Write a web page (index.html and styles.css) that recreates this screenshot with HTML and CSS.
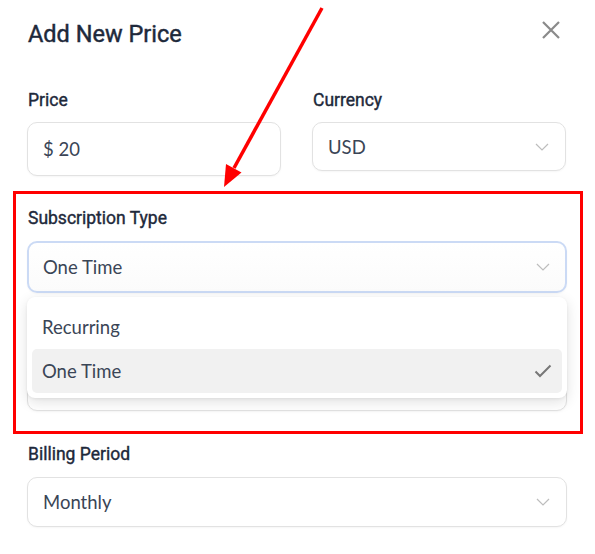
FILE: index.html
```html
<!DOCTYPE html>
<html>
<head>
<meta charset="utf-8">
<link rel="stylesheet" href="styles.css">
</head>
<body>
<div class="modal">
  <div class="header">
    <h1 class="title">Add New Price</h1>
    <svg class="close" width="20" height="20" viewBox="0 0 20 20"><path d="M2 2L18 18M18 2L2 18" stroke="#8a8a8a" stroke-width="2.2" fill="none"/></svg>
  </div>

  <div class="row">
    <div class="field">
      <label class="label">Price</label>
      <div class="control tall">$ 20</div>
    </div>
    <div class="field">
      <label class="label">Currency</label>
      <div class="control short">USD<svg class="chev" width="14" height="8" viewBox="0 0 14 8"><path d="M1 1L7 7L13 1" stroke="#bdbdbd" stroke-width="1.2" fill="none"/></svg></div>
    </div>
  </div>

  <div class="field sub">
    <label class="label">Subscription Type</label>
    <div class="select-wrap">
      <div class="control focused">One Time<svg class="chev" width="14" height="8" viewBox="0 0 14 8"><path d="M1 1L7 7L13 1" stroke="#bdbdbd" stroke-width="1.2" fill="none"/></svg></div>
      <div class="menu">
        <div class="item">Recurring</div>
        <div class="item active">One Time<svg width="18" height="14" viewBox="0 0 18 14"><path d="M1.5 7.5L6 12L16.5 1.5" stroke="#777" stroke-width="2" fill="none"/></svg></div>
      </div>
    </div>
  </div>

  <div class="field hidden-field">
    <div class="label-space"></div>
    <div class="control"></div>
  </div>

  <div class="field billing">
    <label class="label">Billing Period</label>
    <div class="control">Monthly<svg class="chev" width="14" height="8" viewBox="0 0 14 8"><path d="M1 1L7 7L13 1" stroke="#bdbdbd" stroke-width="1.2" fill="none"/></svg></div>
  </div>
</div>

<div class="annot-box"></div>
<svg class="annot-arrow" width="595" height="554" viewBox="0 0 595 554">
  <line x1="322" y1="8" x2="234" y2="168" stroke="#ff0000" stroke-width="3.5"/>
  <polygon points="224,187 241.5,172.5 226,164" fill="#ff0000"/>
</svg>
</body>
</html>
```

FILE: styles.css
```css
* { box-sizing: border-box; }
html, body { margin: 0; padding: 0; background: #fff; }
body { width: 595px; height: 554px; overflow: hidden; position: relative; }

.modal {
  padding: 18px 28px 0 27px;
  font-family: Roboto, "Liberation Sans", sans-serif;
}

.header {
  display: flex;
  justify-content: space-between;
  align-items: center;
  height: 32px;
}
.title {
  margin: 0 0 0 1px;
  font-size: 23.5px;
  font-weight: 400;
  -webkit-text-stroke: 0.45px #1e293b;
  line-height: 32px;
  color: #1e293b;
}
.close { margin-right: 6px; margin-top: -8px; }

.row {
  display: grid;
  grid-template-columns: 254px 254px;
  column-gap: 31px;
  margin-top: 38px;
}

.field { display: flex; flex-direction: column; }
.label {
  display: block;
  font-size: 17.5px;
  font-weight: 400;
  -webkit-text-stroke: 0.4px #1e293b;
  line-height: 24px;
  color: #1e293b;
  margin: 0 0 10px 1px;
}
.label-space { height: 24px; margin-bottom: 13px; }

.control {
  height: 50px;
  border: 1px solid #e2e2e2;
  border-radius: 10px;
  padding: 0 15px;
  display: flex;
  align-items: center;
  justify-content: space-between;
  font-family: Lato, "Open Sans", sans-serif;
  font-size: 18.5px;
  font-weight: 400;
  color: #3a4556;
  background: #fff;
  box-shadow: 0 1px 2px rgba(0,0,0,0.04);
}
.control.tall { height: 54px; }
.control.short { height: 49px; }
.chev { margin-right: 1px; }

.sub { margin-top: 30px; }
.sub .label { margin-bottom: 11px; }
.select-wrap { position: relative; }
.control.focused {
  height: 52px;
  border: 2px solid #cbdaf5;
  padding: 0 14px;
  background: linear-gradient(#fff, #fbfbfb);
}

.menu {
  position: absolute;
  top: 56px;
  left: 0;
  right: 0;
  z-index: 5;
  background: #fff;
  border-radius: 8px;
  padding: 7px 5px 5px 5px;
  box-shadow: 0 4px 14px rgba(0,0,0,0.12), 0 1px 3px rgba(0,0,0,0.06);
}
.item {
  height: 45px;
  padding: 0 10px;
  display: flex;
  align-items: center;
  justify-content: space-between;
  font-family: Lato, "Open Sans", sans-serif;
  font-size: 18.5px;
  font-weight: 400;
  color: #3a4556;
  border-radius: 5px;
}
.item.active { background: #f1f1f1; height: 44px; }

.hidden-field { margin-top: 31px; }

.billing { margin-top: 31px; }
.billing .label { margin-bottom: 11px; }

.annot-box {
  position: absolute;
  left: 13px;
  top: 191px;
  width: 570px;
  height: 243px;
  border: 3px solid #ff0000;
  z-index: 10;
}
.annot-arrow {
  position: absolute;
  left: 0;
  top: 0;
  z-index: 11;
}
```
